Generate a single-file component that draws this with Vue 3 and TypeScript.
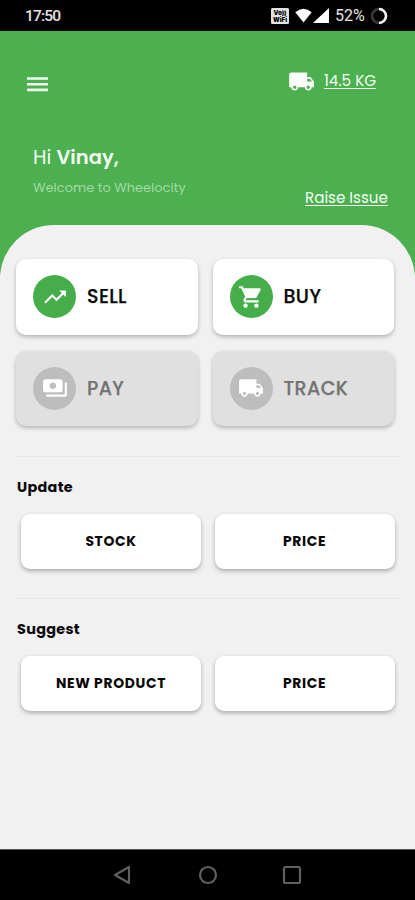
<script setup lang="ts">
interface Tile {
  label: string
  icon: string
  disabled: boolean
}
interface Section {
  title: string
  actions: string[]
}

const paths: Record<string, string> = {
  trend: 'M16 6l2.29 2.29-4.88 4.88-4-4L2 16.59 3.41 18l6-6 4 4 6.3-6.29L22 12V6z',
  cart: 'M7 18c-1.1 0-1.99.9-1.99 2S5.9 22 7 22s2-.9 2-2-.9-2-2-2zM1 2v2h2l3.6 7.59-1.35 2.45c-.16.28-.25.61-.25.96 0 1.1.9 2 2 2h12v-2H7.42c-.14 0-.25-.11-.25-.25l.03-.12.9-1.63h7.45c.75 0 1.41-.41 1.75-1.03l3.58-6.49A1 1 0 0 0 20 4H5.21l-.94-2H1zm16 16c-1.1 0-1.99.9-1.99 2s.89 2 1.99 2 2-.9 2-2-.9-2-2-2z',
  pay: 'M19 14V6c0-1.1-.9-2-2-2H3c-1.1 0-2 .9-2 2v8c0 1.1.9 2 2 2h14c1.1 0 2-.9 2-2zm-9-1c-1.66 0-3-1.34-3-3s1.34-3 3-3 3 1.34 3 3-1.34 3-3 3zm13-6v11c0 1.1-.9 2-2 2H4v-2h17V7h2z',
  truck: 'M20 8h-3V4H3c-1.1 0-2 .9-2 2v11h2c0 1.66 1.34 3 3 3s3-1.34 3-3h6c0 1.66 1.34 3 3 3s3-1.34 3-3h2v-5l-3-4zM6 18.5c-.83 0-1.5-.67-1.5-1.5s.67-1.5 1.5-1.5 1.5.67 1.5 1.5-.67 1.5-1.5 1.5zm13.5-9l1.96 2.5H17V9.5h2.5zm-1.5 9c-.83 0-1.5-.67-1.5-1.5s.67-1.5 1.5-1.5 1.5.67 1.5 1.5-.67 1.5-1.5 1.5z',
}

const tiles: Tile[] = [
  { label: 'SELL', icon: 'trend', disabled: false },
  { label: 'BUY', icon: 'cart', disabled: false },
  { label: 'PAY', icon: 'pay', disabled: true },
  { label: 'TRACK', icon: 'truck', disabled: true },
]

const sections: Section[] = [
  { title: 'Update', actions: ['STOCK', 'PRICE'] },
  { title: 'Suggest', actions: ['NEW PRODUCT', 'PRICE'] },
]
</script>

<template>
  <div class="screen">
    <div class="status">
      <span class="clock">17:50</span>
      <div class="status-icons">
        <svg class="vowifi" viewBox="0 0 18 16">
          <rect width="18" height="16" rx="1.5" fill="#e4e4e4" />
          <text x="9" y="6.6" textLength="13" lengthAdjust="spacingAndGlyphs">Vo))</text>
          <text x="9" y="14.2" textLength="14" lengthAdjust="spacingAndGlyphs">WiFi</text>
        </svg>
        <svg class="wifi" viewBox="0 0 17 15"><path d="M0.3 4.2Q8.5-2.8 16.7 4.2L8.5 14.5z" fill="#fff" /></svg>
        <svg class="signal" viewBox="0 0 16 15"><path d="M16 0v15H0z" fill="#fff" /></svg>
        <span class="percent">52%</span>
        <svg class="battery" viewBox="0 0 18 18" fill="none" stroke-width="2.6">
          <circle cx="9" cy="9" r="7" stroke="#393939" />
          <path d="M9 2a7 7 0 0 1 0 14" stroke="#f4f4f4" />
        </svg>
      </div>
    </div>

    <header class="header">
      <div class="toolbar">
        <svg class="menu" viewBox="0 0 21 15" fill="#f1fff1">
          <rect width="21" height="2.6" y="0.2" rx="0.4" />
          <rect width="21" height="2.6" y="5.9" rx="0.4" />
          <rect width="21" height="2.6" y="11.6" rx="0.4" />
        </svg>
        <div class="load">
          <svg class="load-icon" viewBox="0 0 24 24"><path :d="paths.truck" fill="#fff" /></svg>
          <a class="load-text">14.5 KG</a>
        </div>
      </div>
      <div class="intro">
        <div>
          <div class="hello">Hi <b>Vinay,</b></div>
          <div class="welcome">Welcome to Wheelocity</div>
        </div>
        <a class="issue">Raise Issue</a>
      </div>
    </header>

    <div class="backdrop">
      <main class="sheet">
        <div class="tiles">
          <button
            v-for="tile in tiles"
            :key="tile.label"
            class="tile"
            :class="{ disabled: tile.disabled }"
          >
            <span class="badge">
              <svg viewBox="0 0 24 24"><path :d="paths[tile.icon]" fill="#fff" /></svg>
            </span>
            <span class="tile-label">{{ tile.label }}</span>
          </button>
        </div>
        <section v-for="section in sections" :key="section.title" class="section">
          <h2>{{ section.title }}</h2>
          <div class="actions">
            <button v-for="action in section.actions" :key="action" class="action">
              {{ action }}
            </button>
          </div>
        </section>
      </main>
    </div>

    <nav class="nav">
      <svg viewBox="0 0 20 20"><path d="M2 10 16 2v16z" /></svg>
      <svg viewBox="0 0 20 20"><circle cx="10" cy="10" r="8" /></svg>
      <svg viewBox="0 0 20 20"><rect x="2" y="2" width="16" height="16" rx="1.8" /></svg>
    </nav>
  </div>
</template>

<style>
body {
  background: #f1f1f1;
}
</style>

<style scoped>
.screen {
  box-sizing: border-box;
  width: 415px;
  height: 900px;
  display: flex;
  flex-direction: column;
  overflow: hidden;
  background: #f1f1f1;
  font-family: Poppins, Inter, sans-serif;
  white-space: nowrap;
}
svg {
  display: block;
  flex: none;
}
.status {
  height: 30.5px;
  flex: none;
  display: flex;
  justify-content: space-between;
  padding: 0 27px 0 25px;
  background: #000;
  color: #e4e4e4;
  font-family: Roboto, sans-serif;
}
.clock {
  font-size: 15.5px;
  line-height: 32px;
  font-weight: 500;
  letter-spacing: -0.8px;
}
.status-icons {
  display: flex;
  align-items: center;
}
.vowifi {
  width: 18px;
  height: 16px;
  margin-top: 1px;
}
.vowifi text {
  font: 900 6px Inter, sans-serif;
  fill: #000;
  text-anchor: middle;
}
.wifi {
  width: 17px;
  height: 15px;
  margin: 1px 0 0 6px;
}
.signal {
  width: 16px;
  height: 15px;
  margin: 1px 6px 0 1px;
}
.percent {
  width: 31px;
  font-size: 16px;
  line-height: 30px;
  padding-top: 2px;
}
.battery {
  width: 18px;
  height: 18px;
  margin: 1px 0 0 4px;
}
.header {
  height: 194.5px;
  flex: none;
  background: #4caf50;
  color: #f2fff2;
}
.toolbar {
  display: flex;
  justify-content: space-between;
  align-items: flex-start;
  height: 110px;
  padding: 38px 38px 0 27px;
  box-sizing: border-box;
}
.menu {
  width: 21px;
  height: 15px;
  margin-top: 8px;
}
.load {
  display: flex;
}
.load-icon {
  width: 27px;
  height: 27px;
  margin-top: -0.5px;
}
.load-text {
  margin-left: 9px;
  width: 53px;
  font-size: 15.2px;
  line-height: 24px;
  text-decoration: underline;
  text-underline-offset: 2px;
}
.intro {
  display: flex;
  justify-content: space-between;
  padding: 0 27px 0 33px;
}
.hello {
  font-size: 19.5px;
  line-height: 34px;
}
.hello b {
  font-weight: 600;
}
.welcome {
  font-size: 12.8px;
  line-height: 25px;
  letter-spacing: 0.08px;
  color: #a3dba5;
}
.issue {
  margin-top: 44px;
  width: 83px;
  font-size: 15.1px;
  line-height: 26px;
  text-decoration: underline;
  text-underline-offset: 2px;
}
.backdrop {
  flex: 1;
  background: linear-gradient(#4caf50 50px, #f1f1f1 50px);
}
.sheet {
  height: 100%;
  box-sizing: border-box;
  background: #f1f1f1;
  border-radius: 54px 54px 0 0;
  padding: 34px 15px 0 16px;
}
button {
  border: 0;
  padding: 0;
  font-family: inherit;
  color: #080808;
}
.tiles {
  display: grid;
  grid-template-columns: 181.5px 181.5px;
  gap: 16px 15px;
  padding-bottom: 30px;
}
.tile {
  height: 75.5px;
  display: flex;
  align-items: center;
  padding-left: 17px;
  border-radius: 10px;
  background: #fff;
  box-shadow: 0 2px 4px rgba(0, 0, 0, 0.26);
}
.tile.disabled {
  background: #e0e0e0;
  color: #737373;
}
.badge {
  width: 43px;
  height: 43px;
  display: flex;
  align-items: center;
  justify-content: center;
  border-radius: 50%;
  background: #45ae4a;
}
.disabled .badge {
  background: #bdbdbd;
}
.badge svg {
  width: 26px;
  height: 26px;
}
.tile-label {
  margin-left: 11px;
  padding-top: 1px;
  font-size: 19px;
  line-height: 24px;
  font-weight: 500;
  letter-spacing: 0.4px;
  -webkit-text-stroke: 0.25px currentColor;
}
.section {
  height: 141.5px;
  box-sizing: border-box;
  border-top: 1px solid #e7e7e7;
  padding-top: 18px;
}
h2 {
  margin: 0 0 15px 1px;
  font-size: 14.4px;
  line-height: 24px;
  font-weight: 700;
  letter-spacing: 0.3px;
  color: #080808;
}
.actions {
  display: grid;
  grid-template-columns: 180px 180px;
  column-gap: 13.5px;
  padding-left: 5px;
}
.action {
  height: 55px;
  border-radius: 9px;
  background: #fff;
  box-shadow: 0 2px 4px rgba(0, 0, 0, 0.3);
  font-size: 13.9px;
  font-weight: 700;
  letter-spacing: 0.65px;
}
.nav {
  height: 51px;
  box-sizing: border-box;
  flex: none;
  display: flex;
  justify-content: center;
  gap: 64.5px;
  padding-top: 14.5px;
  background: #000;
  border-top: 1px solid #555;
}
.nav svg {
  width: 20px;
  height: 20px;
  fill: none;
  stroke: #606060;
  stroke-width: 2.2;
  stroke-linejoin: round;
}
</style>
